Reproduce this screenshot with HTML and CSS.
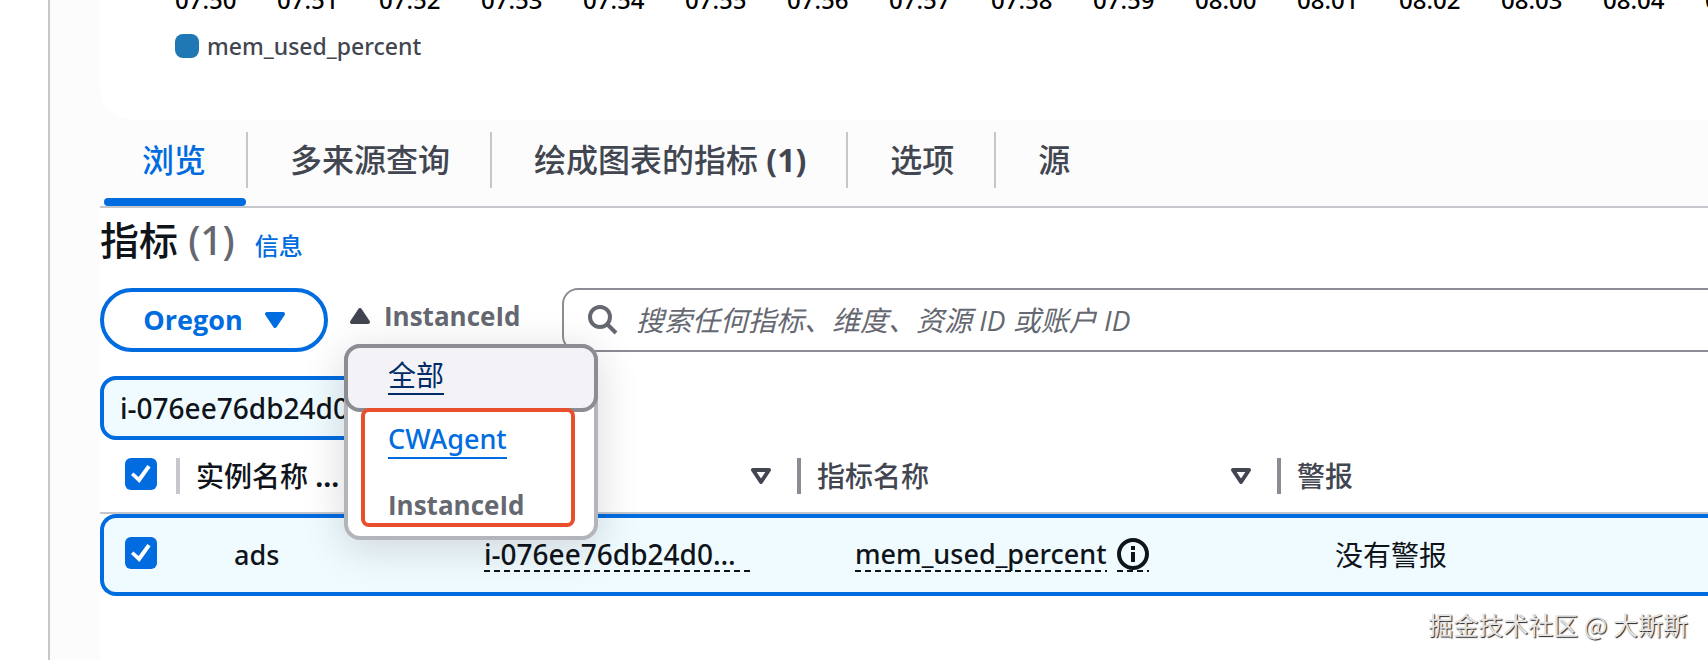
FILE: index.html
```html
<!DOCTYPE html>
<html lang="zh-CN">
<head>
<meta charset="utf-8">
<title>指标</title>
<link rel="stylesheet" href="styles.css">
</head>
<body>
<div class="app">
  <aside class="rail"></aside>
  <main class="main">
    <section class="chart">
      <div class="axis">
        <span>07:50</span><span>07:51</span><span>07:52</span><span>07:53</span><span>07:54</span><span>07:55</span><span>07:56</span><span>07:57</span><span>07:58</span><span>07:59</span><span>08:00</span><span>08:01</span><span>08:02</span><span>08:03</span><span>08:04</span><span>08:05</span>
      </div>
      <div class="legend"><i class="swatch"></i><span>mem_used_percent</span></div>
    </section>

    <nav class="tabs" role="tablist">
      <button class="tab tab-active" role="tab" aria-selected="true">浏览</button>
      <button class="tab" role="tab">多来源查询</button>
      <button class="tab" role="tab">绘成图表的指标 <b>(1)</b></button>
      <button class="tab" role="tab">选项</button>
      <button class="tab" role="tab">源</button>
    </nav>

    <section class="panel">
      <header class="heading">
        <h1 class="title">指标 <span class="count">(1)</span></h1>
        <a class="info" href="#">信息</a>
      </header>

      <div class="filters">
        <button class="region">Oregon
          <svg width="20" height="16" viewBox="0 0 20 16"><path d="M2 2H18L10 14Z" fill="currentColor" stroke="currentColor" stroke-width="4" stroke-linejoin="round"/></svg>
        </button>
        <div class="crumb">
          <button class="crumb-toggle" aria-expanded="true">
            <svg width="20" height="16" viewBox="0 0 20 16"><path d="M2 14H18L10 2Z" fill="#424650" stroke="#424650" stroke-width="4" stroke-linejoin="round"/></svg>
            InstanceId
          </button>
          <div class="menu">
            <div class="menu-item menu-focus"><a class="menu-link" href="#">全部</a></div>
            <div class="menu-item"><a class="menu-link menu-latin" href="#">CWAgent</a></div>
            <div class="menu-item menu-current">InstanceId</div>
            <div class="marker"></div>
          </div>
        </div>
        <label class="search">
          <svg width="30" height="30" viewBox="0 0 30 30" fill="none" stroke="#656871" stroke-width="4"><circle cx="12" cy="12" r="10"/><path d="M19 19L28 28"/></svg>
          <input class="search-input" type="text" aria-label="搜索" placeholder="搜索任何指标、维度、资源 ID 或账户 ID">
        </label>
      </div>

      <button class="chip">i-076ee76db24d0</button>

      <table class="table">
        <colgroup><col class="c-check"><col class="c-name"><col class="c-id"><col class="c-metric"><col></colgroup>
        <thead>
          <tr>
            <th><input class="check" type="checkbox" checked aria-label="全选"></th>
            <th><div class="head head-name"><span>实例名称 <b>...</b></span></div></th>
            <th><div class="head head-plain"><svg width="20" height="16" viewBox="0 0 20 16"><path d="M2 2H18L10 14Z" fill="none" stroke="#424650" stroke-width="4" stroke-linejoin="round"/></svg></div></th>
            <th><div class="head">指标名称<svg width="20" height="16" viewBox="0 0 20 16"><path d="M2 2H18L10 14Z" fill="none" stroke="#424650" stroke-width="4" stroke-linejoin="round"/></svg></div></th>
            <th><div class="head">警报</div></th>
          </tr>
        </thead>
        <tbody>
          <tr>
            <td><input class="check" type="checkbox" checked aria-label="选择 ads"></td>
            <td><span class="latin">ads</span></td>
            <td><span class="latin dashed id-text">i-076ee76db24d0…</span></td>
            <td>
              <div class="metric"><span class="latin dashed">mem_used_percent</span>
              <span class="dashed"><svg width="32" height="32" viewBox="0 0 32 32"><circle cx="16" cy="16" r="14" fill="none" stroke="#0f141a" stroke-width="4"/><path d="M14 8h4v4h-4zM14 14h4v10h-4z" fill="#0f141a"/></svg></span></div>
            </td>
            <td>没有警报</td>
          </tr>
        </tbody>
      </table>
      <p class="watermark">掘金技术社区 @ 大斯斯</p>
    </section>
  </main>
</div>
</body>
</html>
```

FILE: styles.css
```css
* { box-sizing: border-box; }

body {
  margin: 0;
  background: #fff;
  color: #0f141a;
  font-family: "Open Sans", "Noto Sans CJK SC", sans-serif;
  font-size: 28px;
  line-height: 40px;
  overflow: hidden;
}

button, input { font: inherit; }
button { background: none; border: 0; padding: 0; color: inherit; }
svg { display: block; flex: none; overflow: visible; }

.app { display: flex; min-height: 100vh; }
.rail { flex: none; width: 50px; border-right: 2px solid #c6c6cd; }
.main { flex: 1; min-width: 0; padding-left: 50px; background: #fcfcfd; display: flex; flex-direction: column; overflow: hidden; }

.chart { height: 120px; background: #fff; border-bottom-left-radius: 32px; padding-left: 75px; font-family: "Noto Sans", sans-serif; font-weight: 500; }
.axis { display: flex; height: 20px; margin-bottom: 10px; align-items: flex-end; font-size: 24px; line-height: 40px; color: #000; white-space: nowrap; }
.axis span { flex: none; width: 102px; }
.legend { display: flex; align-items: center; gap: 8px; font-size: 23px; line-height: 32px; color: #424650; }
.swatch { width: 24px; height: 24px; border-radius: 8px; background: #1f77b4; }

.tabs { display: flex; height: 88px; padding: 12px 0 0 4px; border-bottom: 2px solid #c6c6cd; }
.tab { position: relative; height: 56px; padding: 0 40px 0 42px; border-right: 2px solid #c6c6cd; font-size: 32px; font-weight: 500; color: #424650; white-space: nowrap; }
.tab:last-child { border-right: 0; }
.tab-active { padding-left: 38px; color: #006ce0; }
.tab-active::after { content: ""; position: absolute; left: 0; right: 0; bottom: -18px; height: 8px; border-radius: 4px; background: #006ce0; }

.panel { flex: 1; background: #fff; }
.heading { display: flex; align-items: baseline; gap: 20px; height: 80px; padding-top: 16px; }
.title { margin: 0; font-size: 39px; line-height: 32px; font-weight: 500; }
.count { color: #656871; font-family: "Noto Sans", sans-serif; }
.info { font-size: 24px; line-height: 32px; font-weight: 500; color: #006ce0; text-decoration: none; }

.filters { display: flex; height: 64px; }
.region { display: flex; align-items: center; justify-content: center; gap: 22px; width: 228px; border: 4px solid #006ce0; border-radius: 32px; color: #006ce0; font-size: 27px; font-weight: 700; }
.crumb { position: relative; width: 234px; padding-left: 22px; }
.crumb-toggle { display: flex; align-items: center; gap: 14px; height: 56px; font-size: 26px; font-weight: 700; color: #656871; }
.search { flex: 1; display: flex; align-items: center; gap: 18px; padding-left: 24px; border: 2px solid #8c8c94; border-right: 0; border-radius: 16px 0 0 16px; background: #fff; }
.search-input { flex: 1; border: 0; padding: 0; outline: 0; background: none; font-style: italic; }
.search-input::placeholder { color: #656871; opacity: 1; }

.menu { position: absolute; z-index: 2; left: 16px; top: 56px; width: 254px; height: 196px; border: 4px solid #b4b4bb; border-radius: 16px; background: #fff; box-shadow: 0 8px 40px 2px rgba(0, 7, 22, 0.14); }
.menu-item { height: 64px; padding: 9px 40px; }
.menu-focus { height: 68px; margin: -4px -4px 0; padding: 9px 40px; border: 4px solid #8c8c94; border-radius: 16px; background: #f3f3f7; }
.menu-link { display: block; width: fit-content; line-height: 36px; border-bottom: 2px solid currentColor; color: #006ce0; text-decoration: none; }
.menu-focus .menu-link { color: #002b66; }
.menu-latin { font-family: "Noto Sans", sans-serif; font-size: 27px; font-weight: 500; }
.menu-current { font-size: 26px; font-weight: 700; color: #656871; }
.marker { position: absolute; left: 13px; top: 60px; width: 214px; height: 119px; border: 4px solid #e8502d; border-radius: 8px; }

.chip { display: block; width: 440px; height: 64px; margin: 24px 0 0; padding-left: 16px; border: 4px solid #006ce0; border-radius: 16px; background: #f0fbff; color: #0f141a; font-family: "Noto Sans", sans-serif; font-size: 28px; font-weight: 500; text-align: left; }

.table { width: 100%; table-layout: fixed; border-spacing: 0; }
.c-check { width: 76px; }
.c-name { width: 250px; }
.c-id { width: 371px; }
.c-metric { width: 480px; }
th { height: 74px; padding: 0; border-bottom: 2px solid #c6c6cd; text-align: left; font-weight: 500; }
.check { appearance: none; display: block; width: 32px; height: 32px; margin: 0 0 4px 25px; border-radius: 6px; background: #006ce0; }
td .check { margin-left: 21px; }
.check::after { content: ""; display: block; width: 20px; height: 18px; margin: 7px 6px; background: #fff; clip-path: polygon(0 56%, 12% 42%, 38% 66%, 82% 0, 98% 12%, 42% 100%); }
.head { display: flex; align-items: center; justify-content: space-between; height: 36px; padding: 0 26px 0 16px; border-left: 4px solid #8c8c94; color: #424650; white-space: nowrap; }
.head-name { border-color: #c6c6cd; color: #0f141a; }
.head-plain { border-color: transparent; justify-content: flex-end; }
td { height: 82px; padding: 0 0 0 58px; border: solid #006ce0; border-width: 4px 0; background: #f0fbff; white-space: nowrap; }
td:first-child { padding: 0; border-left-width: 4px; border-radius: 16px 0 0 16px; }
.latin { display: block; width: fit-content; font-family: "Noto Sans", sans-serif; font-size: 27px; font-weight: 500; line-height: 32px; }
.dashed { padding-bottom: 2px; background: repeating-linear-gradient(90deg, #0f141a 0 6px, transparent 6px 10px) left bottom / 100% 2px no-repeat; }
.id-text { width: 266px; font-size: 28px; }
.metric { display: flex; align-items: center; gap: 10px; }
.watermark { margin: 8px 20px 0 0; text-align: right; font-family: "Noto Sans CJK SC", sans-serif; font-size: 25px; color: #e4e4e4; text-shadow: 1px 1px 1px #222; }
```
